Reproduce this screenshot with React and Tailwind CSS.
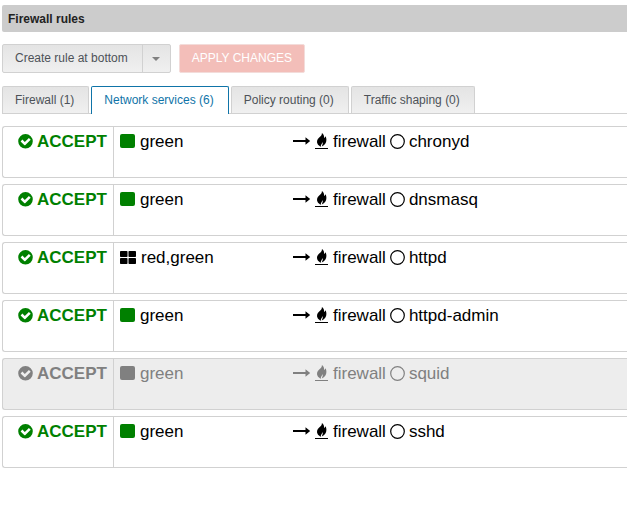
import React, { useState } from 'react';
import clsx from 'clsx';

const tabs = [
    { id: 'firewall', label: 'Firewall (1)' },
    { id: 'services', label: 'Network services (6)' },
    { id: 'routing', label: 'Policy routing (0)' },
    { id: 'shaping', label: 'Traffic shaping (0)' },
];

const rules = [
    { source: 'green', service: 'chronyd', enabled: true },
    { source: 'green', service: 'dnsmasq', enabled: true },
    { source: 'red,green', service: 'httpd', enabled: true },
    { source: 'green', service: 'httpd-admin', enabled: true },
    { source: 'green', service: 'squid', enabled: false },
    { source: 'green', service: 'sshd', enabled: true },
];

function CheckIcon() {
    return (
        <svg className="w-[15px] h-[15px] mb-0.5 shrink-0" viewBox="0 0 15 15" aria-hidden="true">
            <path
                fill="currentColor"
                fillRule="evenodd"
                d="M7.5 0a7.3 7.3 0 1 0 0 14.6a7.3 7.3 0 0 0 0-14.6zM12.7 5.8L7.4 11Q6.8 11.5 6.2 11L2.6 7.4L4.4 5.6L6.8 8L10.9 4z"
            />
        </svg>
    );
}

function SquareIcon() {
    return (
        <svg className="w-4 h-[14px] shrink-0" viewBox="0 0 16 14" aria-hidden="true">
            <rect width="15" height="14" rx="2" fill="currentColor" />
        </svg>
    );
}

function GridIcon() {
    return (
        <svg className="w-[17px] h-[13px] mb-0.5 shrink-0" viewBox="0 0 17 13" fill="currentColor" aria-hidden="true">
            <rect x="0" y="0" width="7.5" height="6" rx="0.8" />
            <rect x="8.5" y="0" width="7.5" height="6" rx="0.8" />
            <rect x="0" y="7" width="7.5" height="6" rx="0.8" />
            <rect x="8.5" y="7" width="7.5" height="6" rx="0.8" />
        </svg>
    );
}

function ArrowIcon() {
    return (
        <svg className="w-[18px] h-[14px] mb-0.5 shrink-0" viewBox="0 0 18 14" fill="currentColor" aria-hidden="true">
            <path d="M0 6h12.5V3.2L17.2 7l-4.7 3.8V8H0z" />
        </svg>
    );
}

function FireIcon() {
    return (
        <svg className="w-[13px] h-4 mb-0.5 shrink-0" viewBox="0 0 13 16" fill="currentColor" aria-hidden="true">
            <path d="M6.9 0C7.2 2 5.8 3.2 4.2 4.6C1.9 6.6 1.4 9 2.7 11.2C3.4 12.2 4.4 13 5.9 13.7C5.7 12.7 5.9 11.8 6.6 10.9C7.1 10.2 7.4 9.6 7.3 8.9C7.9 9.7 7.9 10.7 7.4 11.7C7.1 12.4 6.9 13 6.8 13.6C9.9 12 11.4 9.7 11.4 7C11.4 5.4 11.1 4.3 10.5 3.3C10.3 4.2 9.8 4.8 9 5C9.3 3 8.7 1.2 6.9 0z" />
            <rect x="0" y="15" width="13" height="1" />
        </svg>
    );
}

function CircleIcon() {
    return (
        <svg className="w-[15px] h-[15px] mb-0.5 shrink-0" viewBox="0 0 15 15" fill="none" aria-hidden="true">
            <circle cx="7.5" cy="7.5" r="6.8" stroke="currentColor" strokeWidth="1.2" />
        </svg>
    );
}

function RuleRow({ rule }) {
    const accent = rule.enabled ? 'text-[#008000]' : 'text-[#808080]';
    const many = rule.source.includes(',');

    return (
        <li
            className={clsx(
                'flex min-h-[52px] border border-r-0 border-[#d1d1d1] rounded-l-[3px] text-[17px] leading-5',
                rule.enabled ? 'text-black' : 'bg-[#ededed] text-[#808080]'
            )}
        >
            <div className={clsx('w-[111px] shrink-0 pt-[5px] pl-[15px] border-r border-[#d1d1d1]', accent)}>
                <div className="flex items-center gap-1 font-bold">
                    <CheckIcon />
                    <span>ACCEPT</span>
                </div>
            </div>
            <div className="w-[179px] shrink-0 pt-[5px] pl-1.5">
                <div className="flex items-center gap-1">
                    {many ? <GridIcon /> : <span className={clsx('mb-0.5', accent)}><SquareIcon /></span>}
                    <span>{rule.source}</span>
                </div>
            </div>
            <div className="grow pt-[5px]">
                <div className="flex items-center gap-1">
                    <ArrowIcon />
                    <FireIcon />
                    <span className="ml-px">firewall</span>
                    <CircleIcon />
                    <span>{rule.service}</span>
                </div>
            </div>
        </li>
    );
}

export default function App() {
    const [active, setActive] = useState('services');

    return (
        <main className="min-h-screen bg-white pt-[5px] pl-0.5 text-xs font-['Liberation_Sans',Arial,sans-serif]">
            <h1 className="bg-[#cccccc] rounded-l-[2px] px-1.5 h-[27px] leading-7 font-bold text-[#222222]">
                Firewall rules
            </h1>

            <div className="flex gap-2 mt-3">
                <div className="flex h-[29px] border border-[#d1d1d1] rounded-[2px] bg-linear-to-b from-[#e4e4e4] to-[#f0f0f0] text-[#4d5258]">
                    <button type="button" className="pl-3 pr-3.5 pb-0.5">Create rule at bottom</button>
                    <button
                        type="button"
                        aria-label="More actions"
                        className="w-7 border-l border-[#d1d1d1] flex items-center justify-center"
                    >
                        <svg className="w-2 h-1" viewBox="0 0 8 4" aria-hidden="true">
                            <path d="M0 0h8L4 4z" fill="#808080" />
                        </svg>
                    </button>
                </div>
                <button
                    type="button"
                    disabled
                    className="h-[29px] px-3 pb-0.5 border border-[#f3dcda] rounded-[2px] bg-[#f3beb9] text-white"
                >
                    APPLY CHANGES
                </button>
            </div>

            <div role="tablist" className="flex gap-0.5 mt-[13px] border-b border-[#d1d1d1]">
                {tabs.map((tab) => (
                    <button
                        key={tab.id}
                        type="button"
                        role="tab"
                        aria-selected={active === tab.id}
                        onClick={() => setActive(tab.id)}
                        className={clsx(
                            'pl-3 pr-3.5 border border-b-0 rounded-t-[2px]',
                            active === tab.id
                                ? 'h-7 -mb-px pb-0.5 bg-white border-[#0f74a8] text-[#0f74a8]'
                                : 'h-[27px] bg-linear-to-b from-[#e4e4e4] to-[#f0f0f0] border-[#d1d1d1] text-[#4d5258]'
                        )}
                    >
                        {tab.label}
                    </button>
                ))}
            </div>

            <ul className="flex flex-col gap-1.5 mt-3">
                {rules.map((rule) => (
                    <RuleRow key={rule.service} rule={rule} />
                ))}
            </ul>
        </main>
    );
}
